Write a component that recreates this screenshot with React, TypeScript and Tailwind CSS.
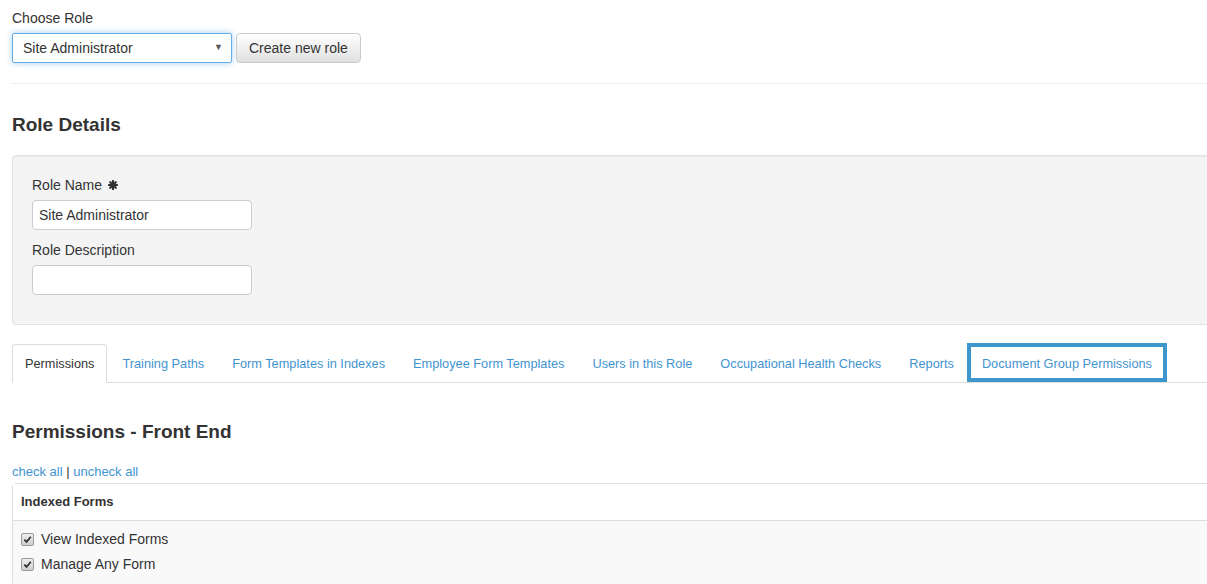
import React from "react";

const tabs = [
  "Permissions",
  "Training Paths",
  "Form Templates in Indexes",
  "Employee Form Templates",
  "Users in this Role",
  "Occupational Health Checks",
  "Reports",
  "Document Group Permissions",
];

const frontEndPerms = ["View Indexed Forms", "Manage Any Form"];

const Asterisk = () => (
  <svg width="10" height="10" viewBox="0 0 10 10" className="inline-block ml-[6px] -mt-[2px]">
    <g stroke="#333" strokeWidth="2.2" strokeLinecap="round">
      <line x1="5" y1="1" x2="5" y2="9" />
      <line x1="1" y1="5" x2="9" y2="5" />
      <line x1="2.2" y1="2.2" x2="7.8" y2="7.8" />
      <line x1="7.8" y1="2.2" x2="2.2" y2="7.8" />
    </g>
  </svg>
);

const CheckBox = () => (
  <span className="inline-flex items-center justify-center w-[13px] h-[13px] rounded-[2px] border border-[#9a9a9a] bg-gradient-to-b from-[#eeeeee] to-[#cfcfcf]">
    <svg width="9" height="9" viewBox="0 0 9 9">
      <path d="M1.3 4.6 L3.6 6.9 L7.8 1.8" fill="none" stroke="#333" strokeWidth="1.8" />
    </svg>
  </span>
);

const App = () => {
  return (
    <div className="w-full h-[584px] overflow-hidden bg-white text-[#333] font-['Liberation_Sans',Arial,sans-serif] text-[14px]">
      <div className="w-[1240px] pl-3 pt-2">
        <label className="block leading-5 mb-[5px]">Choose Role</label>
        <div className="flex items-center gap-1">
          <div className="w-[220px] h-[30px] flex items-center justify-between pl-[10px] pr-[8px] bg-white border border-[#66afe9] rounded-[2px] shadow-[0_0_6px_rgba(102,175,233,0.6)]">
            <span>Site Administrator</span>
            <span className="text-[9px] text-[#555]">▼</span>
          </div>
          <button className="h-[30px] px-3 border border-[#ccc] rounded-[4px] bg-gradient-to-b from-white to-[#e0e0e0] text-[#333]">
            Create new role
          </button>
        </div>

        <hr className="mt-5 border-0 border-t border-[#eee]" />

        <h3 className="mt-[30px] text-[19px] font-bold leading-[21px]">Role Details</h3>

        <div className="mt-5 bg-[#f4f4f4] border border-[#e3e3e3] rounded-l-[4px] shadow-[inset_0_1px_1px_rgba(0,0,0,0.05)] px-[19px] pt-[19px] pb-[19px]">
          <label className="block leading-5 mb-[5px]">
            Role Name
            <Asterisk />
          </label>
          <div className="w-[220px] h-[30px] flex items-center px-[6px] bg-white border border-[#ccc] rounded-[4px]">
            Site Administrator
          </div>
          <label className="block leading-5 mt-[10px] mb-[5px]">Role Description</label>
          <div className="w-[220px] h-[30px] bg-white border border-[#ccc] rounded-[4px] mb-[10px]" />
        </div>

        <ul className="mt-[19px] flex border-b border-[#ddd] text-[12.75px]">
          {tabs.map((t, i) => (
            <li key={t} className="relative mr-[2px] -mb-px">
              {i === 0 ? (
                <span className="block h-[39px] leading-[37px] px-3 bg-white border border-[#ddd] border-b-transparent rounded-t-[4px]">
                  {t}
                </span>
              ) : (
                <a className="block h-[39px] leading-[39px] px-[13px] text-[#3f94d0] cursor-pointer">
                  {t}
                </a>
              )}
              {i === tabs.length - 1 && (
                <span className="absolute -left-[2px] -right-[2px] -top-px bottom-[1px] border-4 border-[#3d96cc] pointer-events-none" />
              )}
            </li>
          ))}
        </ul>

        <h3 className="mt-[38px] text-[19px] font-bold leading-[21px]">Permissions - Front End</h3>

        <div className="mt-[21px] text-[13px] leading-[18px]">
          <a className="text-[#3f94d0] cursor-pointer">check all</a> |{" "}
          <a className="text-[#3f94d0] cursor-pointer">uncheck all</a>
        </div>

        <div className="mt-[2px] border border-[#ddd] rounded-l-[4px]">
          <div className="h-[37px] flex items-center px-2 bg-white border-b border-[#ddd] text-[13px] font-bold">
            Indexed Forms
          </div>
          <div className="bg-[#f9f9f9] px-2 pt-2 pb-3 flex flex-col gap-[5px]">
            {frontEndPerms.map((p) => (
              <label key={p} className="flex items-center gap-[7px] leading-5">
                <CheckBox />
                <span>{p}</span>
              </label>
            ))}
          </div>
        </div>
      </div>
    </div>
  );
};

export default App;
